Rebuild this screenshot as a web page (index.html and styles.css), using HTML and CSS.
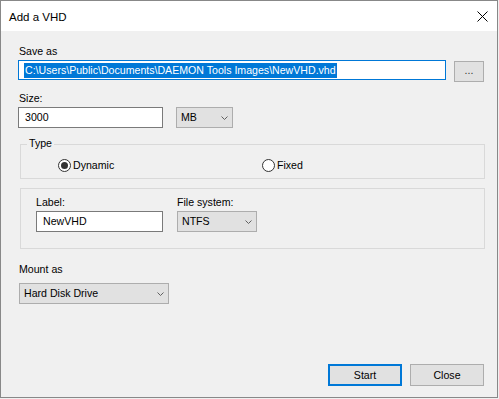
FILE: index.html
```html
<!DOCTYPE html>
<html lang="en">
<head>
    <meta charset="UTF-8">
    <meta name="viewport" content="width=device-width, initial-scale=1.0">
    <title>Add a VHD</title>
    <link rel="stylesheet" href="styles.css">
</head>
<body>
    <div class="window">
        <div class="titlebar">
            <span class="title">Add a VHD</span>
            <svg class="close-icon" width="11" height="11" viewBox="0 0 11 11">
                <path d="M0.5 0.5 L10.5 10.5 M10.5 0.5 L0.5 10.5" stroke="#000" stroke-width="1" fill="none"/>
            </svg>
        </div>

        <div class="content">
            <div class="label">Save as</div>
            <div class="row save-row">
                <div class="textbox path-box focused"><span class="selected">C:\Users\Public\Documents\DAEMON Tools Images\NewVHD.vhd</span></div>
                <div class="button browse">...</div>
            </div>

            <div class="label size-label">Size:</div>
            <div class="row">
                <div class="textbox size-box">3000</div>
                <div class="dropdown unit-box">
                    <span>MB</span>
                    <svg class="chevron" width="7" height="4" viewBox="0 0 7 4"><path d="M0.5 0.5 L3.5 3.5 L6.5 0.5" stroke="#606060" fill="none"/></svg>
                </div>
            </div>

            <!-- Type group -->
            <div class="group type-group">
                <span class="legend">Type</span>
                <div class="radios">
                    <div class="radio-item first">
                        <span class="radio checked"></span>
                        <span>Dynamic</span>
                    </div>
                    <div class="radio-item">
                        <span class="radio"></span>
                        <span>Fixed</span>
                    </div>
                </div>
            </div>

            <div class="group label-group">
                <div class="field">
                    <div class="label">Label:</div>
                    <div class="textbox label-box">NewVHD</div>
                </div>
                <div class="field">
                    <div class="label">File system:</div>
                    <div class="dropdown fs-box">
                        <span>NTFS</span>
                        <svg class="chevron" width="7" height="4" viewBox="0 0 7 4"><path d="M0.5 0.5 L3.5 3.5 L6.5 0.5" stroke="#606060" fill="none"/></svg>
                    </div>
                </div>
            </div>

            <div class="label mount-label">Mount as</div>
            <div class="dropdown mount-box">
                <span>Hard Disk Drive</span>
                <svg class="chevron" width="7" height="4" viewBox="0 0 7 4"><path d="M0.5 0.5 L3.5 3.5 L6.5 0.5" stroke="#606060" fill="none"/></svg>
            </div>

            <div class="footer">
                <div class="button default">Start</div>
                <div class="button">Close</div>
            </div>
        </div>
    </div>
</body>
</html>
```

FILE: styles.css
```css
body {
    margin: 0;
    padding: 0;
    background-color: #f0f0f0;
    font-family: "Liberation Sans", Arial, sans-serif;
    font-size: 10.6px;
    color: #000;
}

.window {
    width: 496px;
    height: 396px;
    border: 1px solid #888888;
    display: flex;
    flex-direction: column;
    background-color: #f0f0f0;
}

.titlebar {
    height: 30px;
    background-color: #ffffff;
    display: flex;
    align-items: center;
    justify-content: space-between;
    padding: 0 9px 0 8px;
}

.title {
    font-size: 11.5px;
    margin-top: 1px;
}

.close-icon {
    margin-top: 1px;
}

.content {
    flex: 1;
    display: flex;
    flex-direction: column;
    padding: 13px 13px 11px 17px;
}

.label {
    line-height: 15px;
    height: 15px;
    margin-bottom: 1px;
    padding-left: 1px;
}

.row {
    display: flex;
    align-items: flex-start;
}

.textbox {
    box-sizing: border-box;
    background-color: #ffffff;
    border: 1px solid #7a7a7a;
    height: 21px;
    line-height: 19px;
    padding-left: 6px;
    white-space: nowrap;
    overflow: hidden;
}

.textbox.focused {
    border-color: #0078d7;
}

.path-box {
    width: 429px;
    height: 20px;
    line-height: 18px;
    padding-left: 6px;
}

.selected {
    background-color: #0078d7;
    color: #ffffff;
    display: inline-block;
    line-height: 15px;
    padding: 0 1px;
    margin-left: -1px;
}

.button {
    box-sizing: border-box;
    background-color: #e1e1e1;
    border: 1px solid #adadad;
    text-align: center;
    height: 22px;
    line-height: 20px;
}

.button.browse {
    width: 30px;
    height: 21px;
    line-height: 17px;
    margin-left: 8px;
    margin-top: 1px;
    color: #333;
}

.button.default {
    border: 2px solid #0078d7;
    line-height: 18px;
}

.size-label {
    margin-top: 9px;
}

.size-box {
    width: 145px;
}

.dropdown {
    box-sizing: border-box;
    background-color: #e1e1e1;
    border: 1px solid #adadad;
    height: 21px;
    line-height: 19px;
    padding: 0 4px 0 4px;
    display: flex;
    align-items: center;
    justify-content: space-between;
}

.unit-box {
    width: 57px;
    margin-left: 13px;
}

.group {
    box-sizing: border-box;
    border: 1px solid #d9d9d9;
    margin-left: 2px;
    width: 465px;
    position: relative;
}

.type-group {
    margin-top: 16px;
    height: 35px;
    padding-top: 13px;
}

.legend {
    position: absolute;
    top: -9px;
    left: 6px;
    padding: 0 2px;
    line-height: 15px;
    background-color: #f0f0f0;
}

.radios {
    display: flex;
    padding-left: 37px;
    line-height: 15px;
}

.radio-item {
    display: flex;
    align-items: center;
    gap: 2px;
}

.radio-item.first {
    width: 204px;
}

.radio {
    box-sizing: border-box;
    width: 13px;
    height: 13px;
    border: 1px solid #333333;
    border-radius: 50%;
    background-color: #ffffff;
    display: flex;
    align-items: center;
    justify-content: center;
}

.radio.checked::after {
    content: "";
    width: 7px;
    height: 7px;
    border-radius: 50%;
    background-color: #333333;
}

.label-group {
    margin-top: 9px;
    height: 61px;
    padding: 6px 0 0 15px;
    display: flex;
    gap: 14px;
}

.label-group .label {
    padding-left: 0;
}

.label-box {
    width: 127px;
}

.fs-box {
    width: 80px;
}

.mount-label {
    margin-top: 13px;
    margin-bottom: 6px;
}

.mount-box {
    width: 150px;
    margin-left: 1px;
}

.footer {
    margin-top: auto;
    display: flex;
    justify-content: flex-end;
    gap: 8px;
}

.footer .button {
    width: 74px;
}
```
